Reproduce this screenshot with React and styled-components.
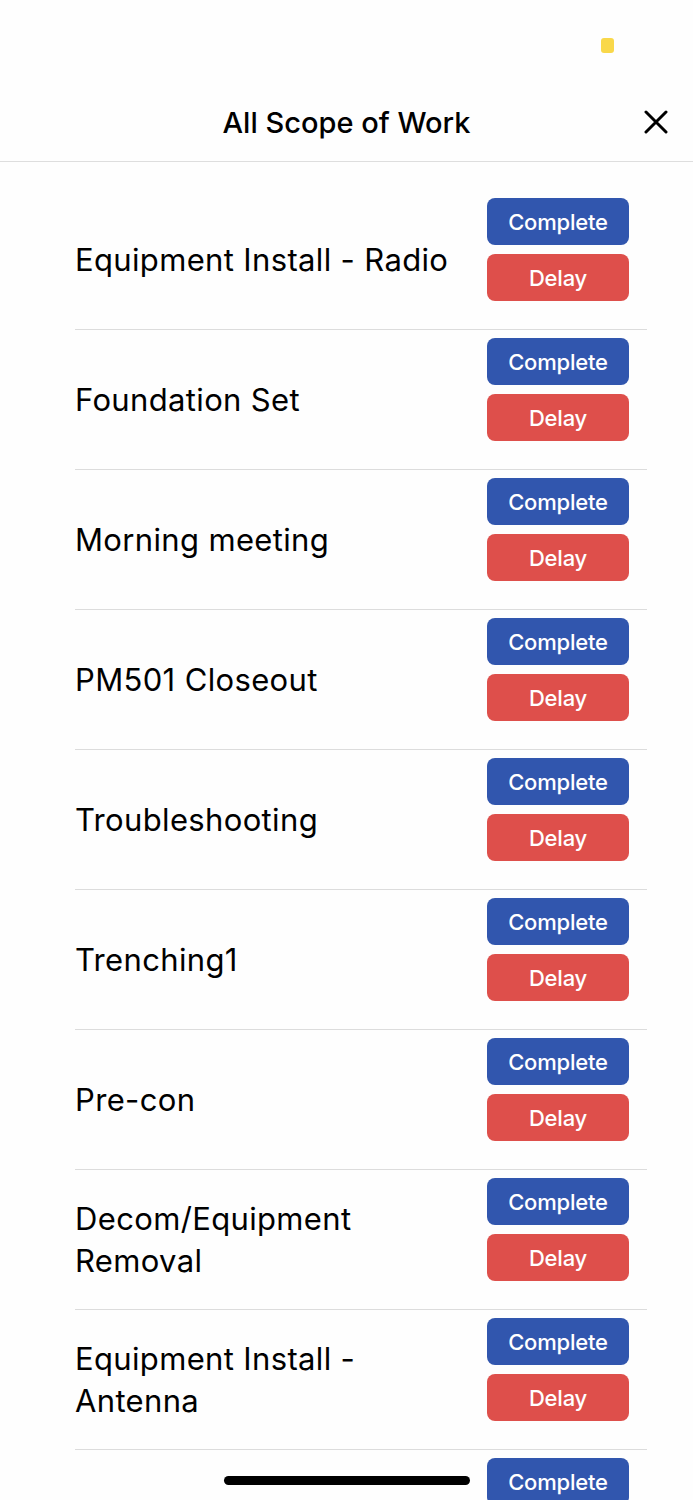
import React from "react";
import styled, { createGlobalStyle } from "styled-components";

const Global = createGlobalStyle`
  html, body { margin: 0; padding: 0; background: #fefefe; }
  body { font-family: Inter, "Noto Sans", sans-serif; overflow: hidden; }
  * { box-sizing: border-box; }
`;

const Screen = styled.div`
  position: relative;
  width: 693px;
  height: 1500px;
  overflow: hidden;
  background: #fefefe;
`;

const StatusBar = styled.div`
  height: 85px;
  display: flex;
  justify-content: flex-end;
  align-items: flex-start;
  padding: 38px 79px 0 0;
`;

const Indicator = styled.div`
  width: 13px;
  height: 15px;
  border-radius: 3px;
  background: #f9d84a;
`;

const TitleBar = styled.div`
  height: 77px;
  display: grid;
  grid-template-columns: 1fr auto 1fr;
  align-items: center;
  border-bottom: 1px solid #dedede;
  padding-bottom: 2px;
`;

const Title = styled.h1`
  grid-column: 2;
  margin: 0;
  font-size: 29px;
  font-weight: 500;
  color: #000;
`;

const CloseButton = styled.button`
  grid-column: 3;
  justify-self: end;
  margin-right: 24px;
  background: none;
  border: none;
  padding: 0;
  width: 26px;
  height: 26px;
  display: flex;
  align-items: center;
  justify-content: center;
`;

const List = styled.div`
  padding: 28px 46px 0 75px;
`;

const Row = styled.div`
  display: flex;
  align-items: center;
  min-height: 140px;
  border-bottom: ${(p) => (p.$last ? "none" : "1px solid #dcdcdc")};
`;

const Label = styled.div`
  flex: 1;
  font-size: 31px;
  line-height: 42px;
  color: #000;
  padding-right: 30px;
  letter-spacing: 0.35px;
`;

const Actions = styled.div`
  align-self: flex-start;
  margin: 8px 18px 0 0;
  display: flex;
  flex-direction: column;
  gap: 9px;
`;

const ActionButton = styled.button`
  width: 142px;
  height: 47px;
  border: none;
  border-radius: 8px;
  background: ${(p) => (p.$variant === "delay" ? "#de4f4b" : "#3156ae")};
  color: #fff;
  font-family: Inter, "Noto Sans", sans-serif;
  font-size: 22px;
  font-weight: 500;
  letter-spacing: -0.2px;
  padding: 0;
`;

const HomeIndicator = styled.div`
  position: absolute;
  left: 224px;
  bottom: 15px;
  width: 246px;
  height: 9px;
  border-radius: 5px;
  background: #000;
`;

const items = [
  "Equipment Install - Radio",
  "Foundation Set",
  "Morning meeting",
  "PM501 Closeout",
  "Troubleshooting",
  "Trenching1",
  "Pre-con",
  "Decom/Equipment Removal",
  "Equipment Install - Antenna",
  "",
];

export default function App() {
  return (
    <>
      <Global />
      <Screen>
        <StatusBar>
          <Indicator />
        </StatusBar>
        <TitleBar>
          <Title>All Scope of Work</Title>
          <CloseButton aria-label="Close">
            <svg width="24" height="24" viewBox="0 0 24 24">
              <path d="M2 2 L22 22 M22 2 L2 22" stroke="#000" strokeWidth="3" strokeLinecap="round" />
            </svg>
          </CloseButton>
        </TitleBar>
        <List>
          {items.map((name, i) => (
            <Row key={i} $last={i === items.length - 1}>
              <Label>{name}</Label>
              <Actions>
                <ActionButton>Complete</ActionButton>
                <ActionButton $variant="delay">Delay</ActionButton>
              </Actions>
            </Row>
          ))}
        </List>
        <HomeIndicator />
      </Screen>
    </>
  );
}
